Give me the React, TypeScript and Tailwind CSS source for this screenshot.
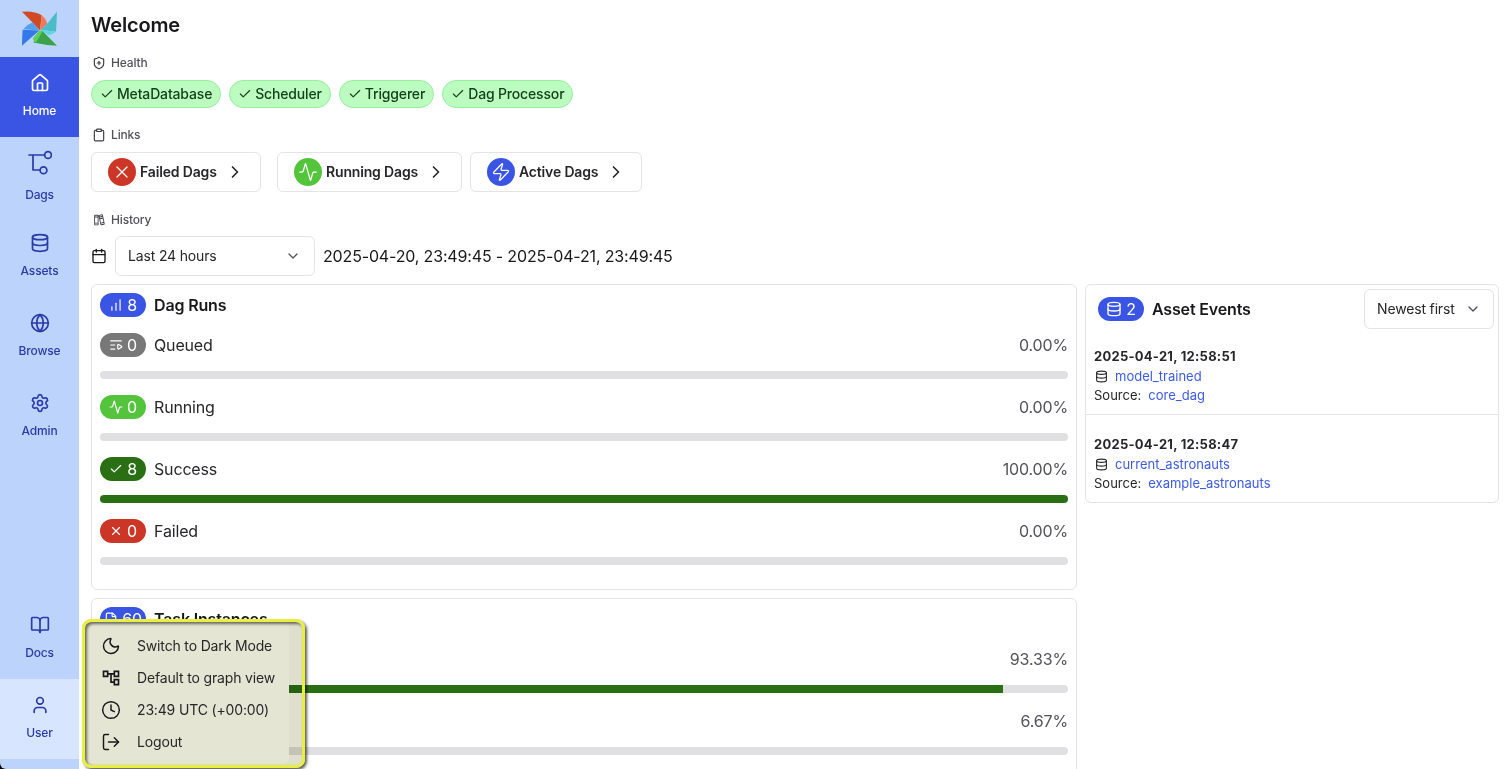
import {
  Activity, BookOpen, Calendar, Check, ChartNoAxesColumnIncreasing, ChevronDown, ChevronRight,
  Clipboard, Clock, Database, File, Globe, House, ListVideo, LogOut, Moon, Settings, ShieldPlus, User, X, Zap,
} from 'lucide-react'
import { PiBooks } from 'react-icons/pi'
import { MdOutlineAccountTree } from 'react-icons/md'

function DagIcon() {
  return (
    <svg width="24" height="28" viewBox="0 -2 24 28" fill="none" stroke="currentColor" strokeWidth="1.7" strokeLinecap="round" strokeLinejoin="round">
      <path d="M1 4h15.5M5 4v15h6.5" />
      <circle cx="20" cy="4" r="3.4" />
      <circle cx="15.5" cy="19.2" r="3.4" />
    </svg>
  )
}

function Logo() {
  return (
    <svg width="40" height="39" viewBox="60 24 120 116">
      <path d="M66 32Q100 28 125 42L120 88Q92 58 66 32Z" fill="#d04a25" />
      <path d="M125 42Q138 52 142 68L120 88Z" fill="#f0795a" />
      <path d="M171 32Q170 64 168 92L122 86L142 68Q156 48 171 32Z" fill="#4cbcc9" />
      <path d="M122 86L168 92Q158 100 146 102Z" fill="#5fd6e4" />
      <path d="M171 134Q136 132 100 124L126 88Q150 112 171 134Z" fill="#3aa24a" />
      <path d="M98 112L118 88L128 90L108 124Q100 118 98 112Z" fill="#5ccf5e" />
      <path d="M66 134Q66 108 68 86L118 88Q92 110 66 134Z" fill="#3479e8" />
      <path d="M70 84Q84 68 98 64L118 88Z" fill="#54a0f0" />
    </svg>
  )
}

const navTop = [
  { label: 'Home', icon: <House size={20} />, active: true },
  { label: 'Dags', icon: <DagIcon /> },
  { label: 'Assets', icon: <Database size={20} /> },
  { label: 'Browse', icon: <Globe size={20} /> },
  { label: 'Admin', icon: <Settings size={20} /> },
]

function NavItem({ label, icon, active, light }: { label: string; icon: React.ReactNode; active?: boolean; light?: boolean }) {
  return (
    <div
      className={`flex h-20 flex-col items-center justify-center gap-[10px] pb-[2px] text-xs font-medium ${
        active ? 'bg-[#3a55e3] text-white' : light ? 'bg-[#d8e5fe] text-[#2b3aa8]' : 'text-[#2b3aa8]'
      }`}
    >
      {icon}
      <span>{label}</span>
    </div>
  )
}

function Sidebar() {
  return (
    <div className="flex h-full w-[79px] shrink-0 flex-col rounded-bl-[6px] bg-[#bcd3fc] pb-[10px]">
      <div className="flex h-[57px] items-center justify-center">
        <Logo />
      </div>
      {navTop.map((n) => (
        <NavItem key={n.label} {...n} />
      ))}
      <div className="flex-1" />
      <NavItem label="Docs" icon={<BookOpen size={20} />} />
      <NavItem label="User" icon={<User size={20} />} light />
    </div>
  )
}

function SectionLabel({ icon, text }: { icon: React.ReactNode; text: string }) {
  return (
    <div className="flex h-4 items-center gap-[5px] pl-[1px] text-xs font-medium text-[#52525b]">
      <span className="text-[#3f3f46]">{icon}</span>
      {text}
    </div>
  )
}

function HealthPill({ text }: { text: string }) {
  return (
    <div className="flex h-7 items-center gap-[3px] rounded-full border border-[#97ee9d] bg-[#bdfcc1] px-2 text-sm font-medium text-[#14401c]">
      <Check size={14} />
      {text}
    </div>
  )
}

function LinkButton({ text, color, icon, w }: { text: string; color: string; icon: React.ReactNode; w: string }) {
  return (
    <div className={`flex h-10 items-center rounded-md border border-[#e4e4e7] pl-4 text-sm font-semibold text-[#27272a] ${w}`}>
      <span className={`mr-1 flex size-7 items-center justify-center rounded-full text-white ${color}`}>{icon}</span>
      {text}
      <ChevronRight size={20} className="ml-2" />
    </div>
  )
}

function Badge({ color, icon, count }: { color: string; icon: React.ReactNode; count: number }) {
  return (
    <span className={`flex h-6 w-[46px] items-center justify-center gap-1 rounded-full text-base text-white ${color}`}>
      {icon}
      {count}
    </span>
  )
}

function StatRow({ color, bar, icon, count, label, pct, width }: {
  color: string; bar: string; icon: React.ReactNode; count: number; label: string; pct: string; width: number
}) {
  return (
    <div className="mb-4">
      <div className="mb-[14px] flex h-6 items-center gap-2 text-base text-[#27272a]">
        <Badge color={color} icon={icon} count={count} />
        <span>{label}</span>
        <span className="ml-auto text-[#52525b]">{pct}</span>
      </div>
      <div className="h-2 overflow-hidden rounded-full bg-[#e0e0e2]">
        {/* width comes from the row's data */}
        <div className={`h-full ${bar}`} style={{ width: `${width}%` }} />
      </div>
    </div>
  )
}

function AssetEvent({ time, name, source }: { time: string; name: string; source: string }) {
  return (
    <div className="px-2 text-[13px] tracking-normal text-[#27272a]">
      <div className="h-5 text-[13px] font-bold leading-5 tracking-[0.25px]">{time}</div>
      <div className="mt-[1px] flex h-[18px] items-center leading-[18px]">
        <Database size={13} className="ml-[1px] mr-[7px]" />
        <span className="text-[#3d5be6]">{name}</span>
      </div>
      <div className="mt-[1px] h-[18px] leading-[18px]">
        Source:<span className="ml-[7px] text-[#3d5be6]">{source}</span>
      </div>
    </div>
  )
}

function UserMenu() {
  const items = [
    { icon: <Moon size={20} strokeWidth={1.75} />, text: 'Switch to Dark Mode' },
    { icon: <MdOutlineAccountTree size={20} />, text: 'Default to graph view' },
    { icon: <Clock size={20} strokeWidth={1.75} />, text: '23:49 UTC (+00:00)' },
    { icon: <LogOut size={20} strokeWidth={1.75} />, text: 'Logout' },
  ]
  return (
    <div className="absolute left-[82px] top-[619px] h-[149px] w-[223px]">
      <div className="absolute inset-0 rounded-[9px] bg-[#dedfcc] mix-blend-multiply" />
      <div className="absolute bottom-1 left-[3px] right-4 top-[3px] rounded-md bg-[#e4e5d3] py-2 pl-4 text-sm text-[#27272a]">
        {items.map((it) => (
          <div key={it.text} className="flex h-8 items-center gap-4 whitespace-nowrap">
            <span className="flex w-5 justify-center text-[#18181b]">{it.icon}</span>
            <span>{it.text}</span>
          </div>
        ))}
      </div>
      <div className="absolute inset-0 rounded-[9px] border-[3px] border-[#e8ef3c] shadow-[2px_2px_3px_rgba(0,0,0,0.65),inset_2px_2px_3px_rgba(0,0,0,0.55)]" />
    </div>
  )
}

export default function App() {
  return (
    <div className="relative flex h-[769px] w-full overflow-hidden bg-black font-['Inter',sans-serif] tracking-[-0.01em]">
      <Sidebar />
      <main className="h-full flex-1 overflow-hidden bg-white pl-3 pr-[9px]">
        <h1 className="mb-[5px] flex h-[50px] items-center text-xl font-semibold text-[#18181b]">Welcome</h1>
        <SectionLabel icon={<ShieldPlus size={14} />} text="Health" />
        <div className="mt-[9px] flex gap-2">
          {['MetaDatabase', 'Scheduler', 'Triggerer', 'Dag Processor'].map((t) => (
            <HealthPill key={t} text={t} />
          ))}
        </div>
        <div className="mt-[19px]">
          <SectionLabel icon={<Clipboard size={14} />} text="Links" />
        </div>
        <div className="mt-[9px] flex gap-2">
          <LinkButton w="mr-2 w-[170px]" color="bg-[#cc3626]" icon={<X size={20} strokeWidth={1.5} />} text="Failed Dags" />
          <LinkButton w="w-[185px]" color="bg-[#53c43c]" icon={<Activity size={20} strokeWidth={1.5} />} text="Running Dags" />
          <LinkButton w="w-[172px]" color="bg-[#3a55e3]" icon={<Zap size={20} strokeWidth={1.5} />} text="Active Dags" />
        </div>
        <div className="mt-5">
          <SectionLabel icon={<PiBooks size={14} />} text="History" />
        </div>
        <div className="mt-2 flex items-center gap-2">
          <Calendar size={16} className="text-[#18181b]" />
          <div className="flex h-10 w-[200px] items-center justify-between rounded-md border border-[#e4e4e7] px-3 text-sm text-[#27272a]">
            Last 24 hours
            <ChevronDown size={16} className="mr-[1px] text-[#52525b]" />
          </div>
          <span className="text-base text-[#18181b]">2025-04-20, 23:49:45 - 2025-04-21, 23:49:45</span>
        </div>

        <div className="mt-2 flex items-start gap-2">
          <div className="flex flex-1 flex-col gap-2">
            <section className="rounded-md border border-[#e4e4e7] p-2">
              <div className="mb-4 flex h-6 items-center gap-2 text-base font-semibold text-[#18181b]">
                <Badge color="bg-[#3a55e3] font-normal" icon={<ChartNoAxesColumnIncreasing size={14} />} count={8} />
                Dag Runs
              </div>
              <StatRow color="bg-[#787878]" bar="bg-[#787878]" icon={<ListVideo size={14} />} count={0} label="Queued" pct="0.00%" width={0} />
              <StatRow color="bg-[#53c43c]" bar="bg-[#53c43c]" icon={<Activity size={14} />} count={0} label="Running" pct="0.00%" width={0} />
              <StatRow color="bg-[#2b6f15]" bar="bg-[#2b6f15]" icon={<Check size={14} />} count={8} label="Success" pct="100.00%" width={100} />
              <StatRow color="bg-[#cc3626]" bar="bg-[#cc3626]" icon={<X size={14} />} count={0} label="Failed" pct="0.00%" width={0} />
            </section>
            <section className="rounded-md border border-[#e4e4e7] p-2">
              <div className="mb-4 flex h-6 items-center gap-2 text-base font-semibold text-[#18181b]">
                <Badge color="bg-[#3a55e3] font-normal" icon={<File size={14} />} count={60} />
                Task Instances
              </div>
              <StatRow color="bg-[#2b6f15]" bar="bg-[#2b6f15]" icon={<Check size={14} />} count={56} label="Success" pct="93.33%" width={93.33} />
              <StatRow color="bg-[#cc3626]" bar="bg-[#cc3626]" icon={<X size={14} />} count={4} label="Failed" pct="6.67%" width={0} />
            </section>
          </div>

          <section className="w-[414px] shrink-0 rounded-md border border-[#e4e4e7]">
            <div className="flex h-[44px] items-center pl-3 pr-1 pt-1">
              <Badge color="bg-[#3a55e3]" icon={<Database size={16} />} count={2} />
              <span className="ml-2 text-base font-semibold text-[#18181b]">Asset Events</span>
              <div className="ml-auto flex h-10 w-[130px] items-center justify-between rounded-md border border-[#e4e4e7] px-3 text-sm text-[#27272a]">
                Newest first
                <ChevronDown size={16} className="text-[#52525b]" />
              </div>
            </div>
            <div className="border-b border-[#e4e4e7] pb-[10px] pt-[17px]">
              <AssetEvent time="2025-04-21, 12:58:51" name="model_trained" source="core_dag" />
            </div>
            <div className="pb-[10px] pt-[19px]">
              <AssetEvent time="2025-04-21, 12:58:47" name="current_astronauts" source="example_astronauts" />
            </div>
          </section>
        </div>
      </main>
      <UserMenu />
    </div>
  )
}
